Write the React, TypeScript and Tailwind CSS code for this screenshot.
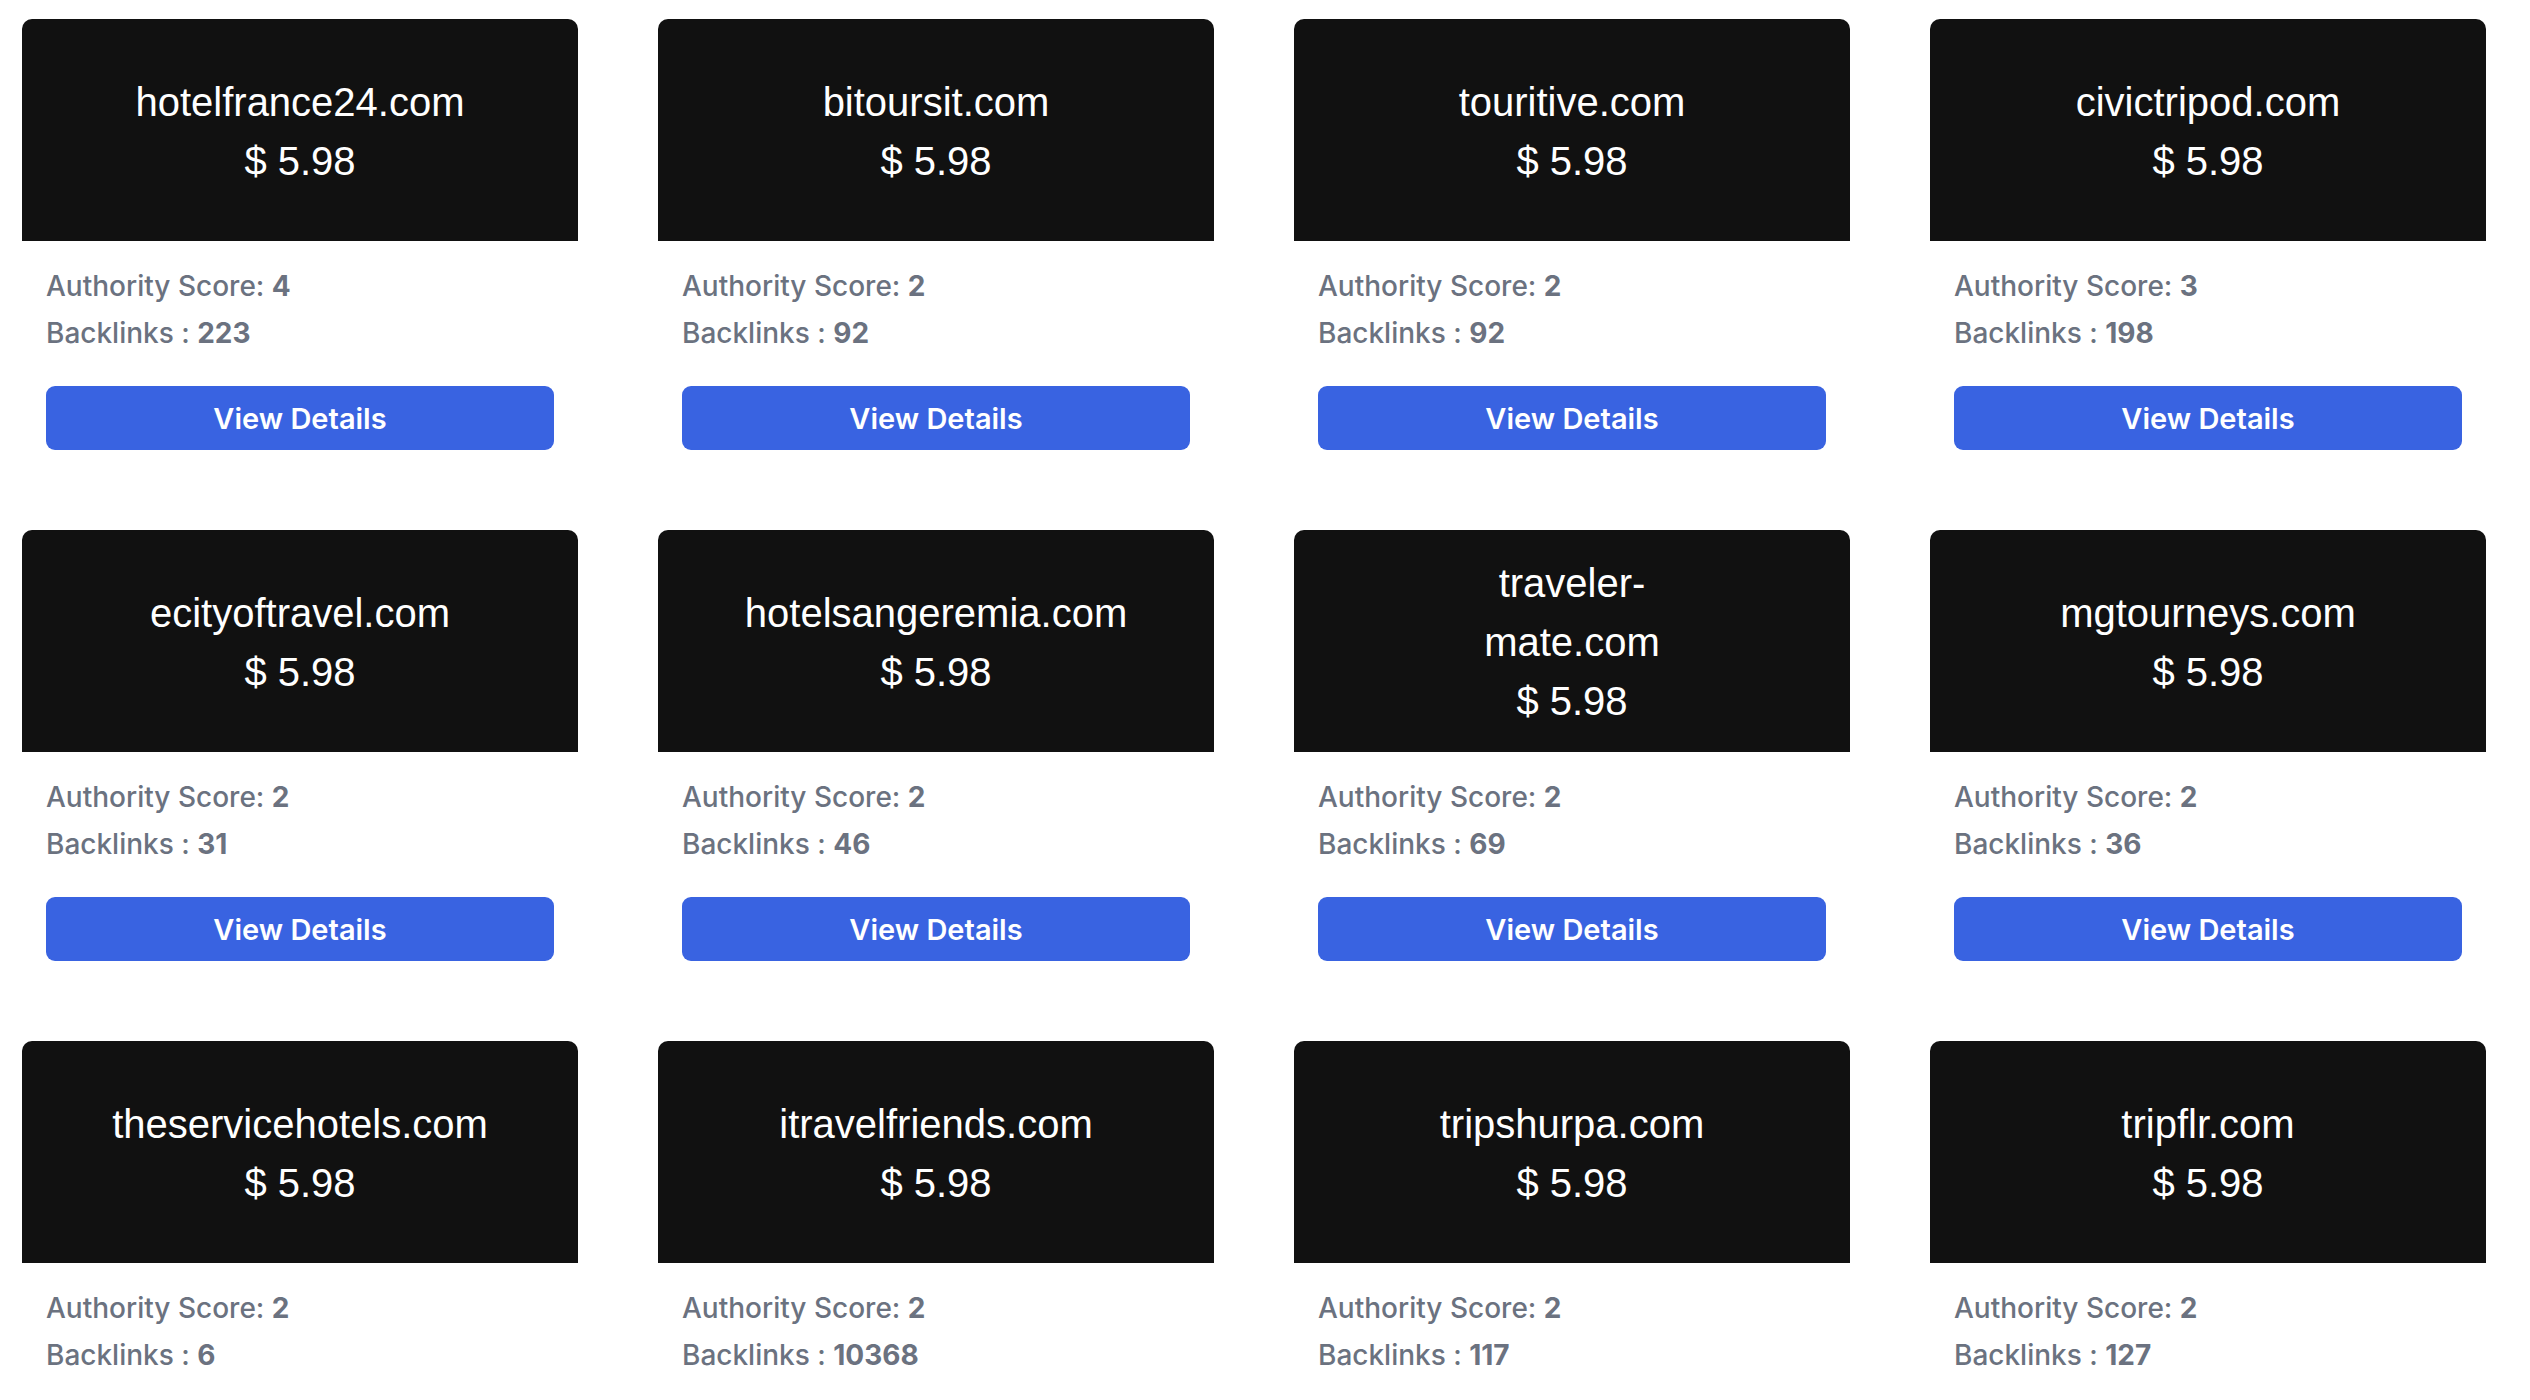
import React from "react";

type Site = { domain: string; score: number; backlinks: number };

const sites: Site[] = [
  { domain: "hotelfrance24.com", score: 4, backlinks: 223 },
  { domain: "bitoursit.com", score: 2, backlinks: 92 },
  { domain: "touritive.com", score: 2, backlinks: 92 },
  { domain: "civictripod.com", score: 3, backlinks: 198 },
  { domain: "ecityoftravel.com", score: 2, backlinks: 31 },
  { domain: "hotelsangeremia.com", score: 2, backlinks: 46 },
  { domain: "traveler-\nmate.com", score: 2, backlinks: 69 },
  { domain: "mgtourneys.com", score: 2, backlinks: 36 },
  { domain: "theservicehotels.com", score: 2, backlinks: 6 },
  { domain: "itravelfriends.com", score: 2, backlinks: 10368 },
  { domain: "tripshurpa.com", score: 2, backlinks: 117 },
  { domain: "tripflr.com", score: 2, backlinks: 127 },
];

function Card({ site }: { site: Site }) {
  return (
    <div className="flex flex-col bg-white">
      <div className="flex h-[222px] flex-col items-center justify-center rounded-t-[10px] bg-[#111111] pt-[3px] text-center text-white font-['Liberation_Sans',Arial,sans-serif] text-[40px] leading-[59px]">
        <div className="whitespace-pre-line">{site.domain}</div>
        <div>$ 5.98</div>
      </div>
      <div className="px-[24px] pt-[22px] font-['Inter',sans-serif] text-[28px] leading-[47px] text-[#6b7280]">
        <div className="font-medium">
          Authority Score: <span className="font-bold">{site.score}</span>
        </div>
        <div className="font-medium">
          Backlinks : <span className="font-bold">{site.backlinks}</span>
        </div>
        <button className="mt-[29px] flex h-[64px] w-full items-center justify-center rounded-[9px] bg-[#3963e1] text-[29px] font-semibold text-white">
          View Details
        </button>
      </div>
    </div>
  );
}

export default function App() {
  return (
    <div className="min-h-screen bg-white">
      <div className="grid grid-cols-[repeat(4,556px)] gap-x-[80px] gap-y-[80px] pl-[22px] pt-[19px]">
        {sites.map((s) => (
          <Card key={s.domain} site={s} />
        ))}
      </div>
    </div>
  );
}
